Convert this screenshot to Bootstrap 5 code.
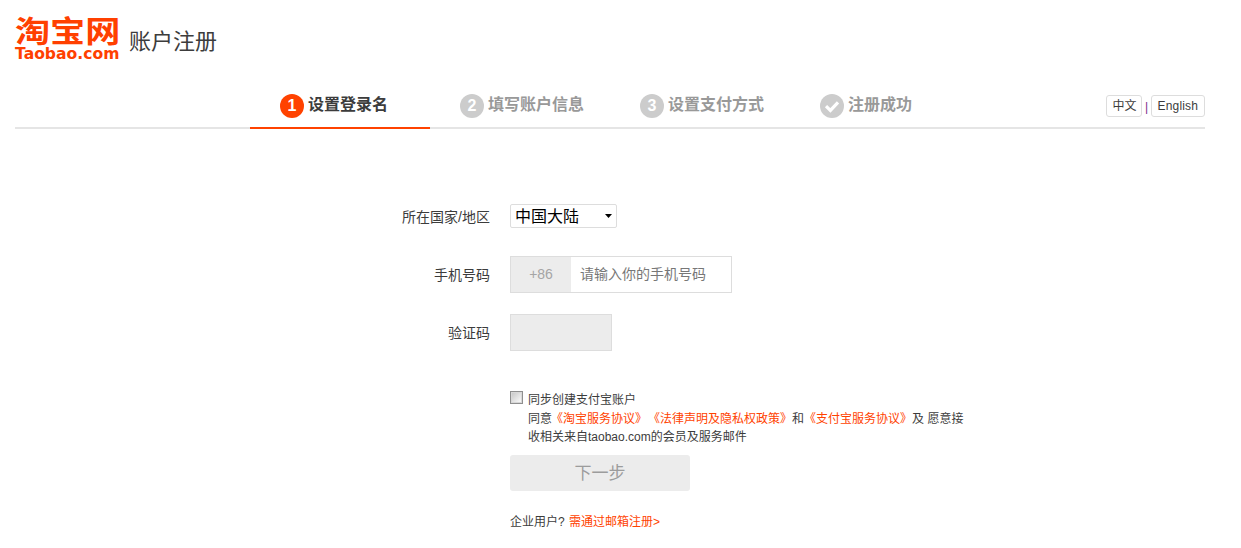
<!DOCTYPE html>
<html lang="zh-CN">

<head>
  <meta charset="UTF-8" />
  <title>账户注册</title>
  <link href="https://cdn.jsdelivr.net/npm/bootstrap@5.3.0/dist/css/bootstrap.min.css" rel="stylesheet" />
  <style>
    body { font-family: "Liberation Sans", "Noto Sans CJK SC", sans-serif; font-size: 12px; color: #3c3c3c; background: #fff; }
    .page-wrap { width: 1190px; margin-left: 15px; }
    .top-head { height: 82px; padding-top: 17px; }
    .logo-box { width: 106px; color: #ff4000; }
    .logo-cn { font-size: 30px; line-height: 29px; font-weight: 700; white-space: nowrap; transform: scaleX(1.17); transform-origin: left center; }
    .logo-en { font-family: "DejaVu Sans", sans-serif; font-size: 15.6px; line-height: 16px; font-weight: 700; white-space: nowrap; }
    .head-title { font-size: 22px; line-height: 30px; margin-left: 8px; margin-top: 10px; color: #3c3c3c; }
    .step-bar { height: 47px; border-bottom: 2px solid #e5e5e5; padding-left: 235px; }
    .step-item { width: 180px; height: 47px; padding-left: 30px; gap: 4px; color: #999; font-size: 16px; font-weight: 700; border-bottom: 2px solid transparent; }
    .step-item.on { color: #3c3c3c; border-bottom-color: #ff4200; }
    .step-num { width: 24px; height: 24px; margin-top: 2px; border-radius: 50%; background: #ccc; color: #fff; font-size: 16px; font-weight: 700; line-height: 24px; text-align: center; }
    .step-item.on .step-num { background: #ff4200; }
    .lang-box { margin-left: auto; gap: 2.5px; color: #7b2d8b; padding-bottom: 10px; }
    .lang-sep { line-height: 20px; }
    .lang-btn { height: 22px; line-height: 20px; padding: 0 5px; border: 1px solid #ddd; border-radius: 3px; color: #3c3c3c; background: #fff; font-size: 12px; text-decoration: none; }
    .lang-btn.wide { padding: 0 6px; letter-spacing: .15px; }
    .form-zone { padding-top: 74px; }
    .form-line { gap: 20px; }
    .form-line + .form-line { margin-top: 21px; }
    .form-line.first { margin-bottom: 28px; }
    .field-name { width: 475px; text-align: right; font-size: 14px; color: #3c3c3c; padding-top: 2px; }
    .form-line.first .field-name { padding-top: 4px; }
    .country-pick { width: 107px; height: 24px; font-size: 16px; color: #000; border: 1px solid #ddd; border-radius: 2px; padding: 0 0 0 4px; font-family: "Liberation Sans", "Noto Sans CJK SC", sans-serif; appearance: none; background: #fff url("data:image/svg+xml,%3Csvg xmlns='http://www.w3.org/2000/svg' width='7' height='4'%3E%3Cpath d='M0 0h7L3.5 4z' fill='%23000'/%3E%3C/svg%3E") no-repeat 94px 9px; }
    .phone-box { width: 222px; height: 37px; border: 1px solid #ddd; }
    .phone-pre { width: 60px; background: #ececec; color: #a5a5a5; font-size: 14px; }
    .phone-hint { padding-left: 9px; font-size: 14px; color: #777; }
    .code-box { width: 102px; height: 37px; background: #ececec; border: 1px solid #ddd; }
    .agree-zone { margin: 40px 0 0 495px; width: 470px; line-height: 18.5px; white-space: nowrap; text-spacing-trim: space-all; font-feature-settings: "chws" 0, "halt" 0; }
    .agree-check { width: 13px; height: 13px; margin: 0 5px 0 0; flex: none; appearance: none; border: 1px solid #8f8f8f; box-shadow: inset 0 0 0 1px #d8d8d8; background: linear-gradient(135deg, #c4c4c4, #fff); }
    .org-link { color: #ff4200; text-decoration: none; }
    .pull-a { margin-left: -1px; }
    .pull-b { margin-left: 1px; }
    .next-btn { display: block; width: 180px; height: 36px; margin: 8px 0 0 495px; padding-top: 4px; background: #ececec; border: 0; border-radius: 3px; color: #9c9c9c; font-size: 17px; }
    .corp-line { margin: 22px 0 0 495px; line-height: 18px; }
    .corp-line .org-link { margin-left: 1px; }
  </style>
</head>

<body>
  <div class="page-wrap">

    <!-- cabecera -->
    <div class="top-head d-flex">
      <div class="logo-box">
        <div class="logo-cn">淘宝网</div>
        <div class="logo-en">Taobao.com</div>
      </div>
      <div class="head-title">账户注册</div>
    </div>

    <!-- pasos -->
    <div class="step-bar d-flex">
      <div class="step-item on d-flex align-items-center"><span class="step-num">1</span>设置登录名</div>
      <div class="step-item d-flex align-items-center"><span class="step-num">2</span>填写账户信息</div>
      <div class="step-item d-flex align-items-center"><span class="step-num">3</span>设置支付方式</div>
      <div class="step-item d-flex align-items-center">
        <span class="step-num d-flex align-items-center justify-content-center">
          <svg width="18" height="18" viewBox="0 0 18 18"><path d="M3 9.2 7.4 13.4 15 5.4" fill="none" stroke="#fff" stroke-width="3.2"/></svg>
        </span>注册成功
      </div>
      <div class="lang-box d-flex align-items-end">
        <a class="lang-btn" href="#">中文</a><span class="lang-sep">|</span><a class="lang-btn wide" href="#">English</a>
      </div>
    </div>

    <!-- formulario -->
    <div class="form-zone">
      <div class="form-line first d-flex align-items-center">
        <div class="field-name">所在国家/地区</div>
        <select class="country-pick"><option>中国大陆</option></select>
      </div>
      <div class="form-line d-flex align-items-center">
        <div class="field-name">手机号码</div>
        <div class="phone-box d-flex">
          <div class="phone-pre d-flex align-items-center justify-content-center">+86</div>
          <div class="phone-hint d-flex align-items-center">请输入你的手机号码</div>
        </div>
      </div>
      <div class="form-line d-flex align-items-center">
        <div class="field-name">验证码</div>
        <div class="code-box"></div>
      </div>
    </div>

    <div class="agree-zone d-flex">
      <input class="agree-check" type="checkbox" />
      <div>
        同步创建支付宝账户<br />
        同意<a class="org-link pull-a" href="#">《淘宝服务协议》</a><a class="org-link pull-b" href="#">《法律声明及隐私权政策》</a>和<a class="org-link" href="#">《支付宝服务协议》</a>及 愿意接<br />
        收相关来自taobao.com的会员及服务邮件
      </div>
    </div>

    <button class="next-btn" type="button">下一步</button>

    <div class="corp-line">企业用户? <a class="org-link" href="#">需通过邮箱注册&gt;</a></div>
  </div>

  <script src="https://cdn.jsdelivr.net/npm/bootstrap@5.3.0/dist/js/bootstrap.bundle.min.js"></script>
</body>

</html>
